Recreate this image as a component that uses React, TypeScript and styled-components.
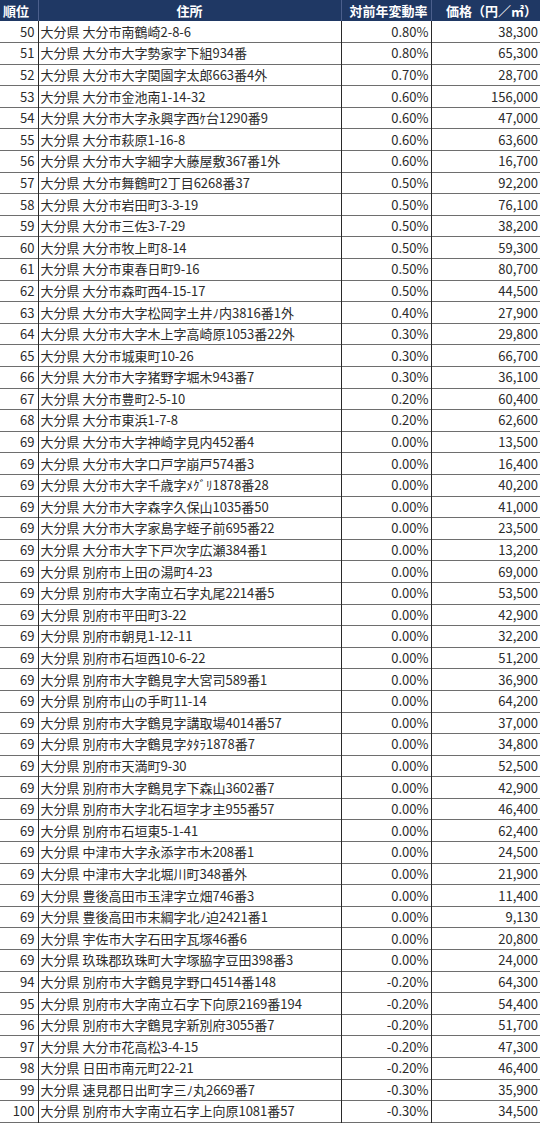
import styled, { createGlobalStyle } from 'styled-components';

const GlobalStyle = createGlobalStyle`
  html, body {
    margin: 0;
    padding: 0;
    background: #ffffff;
  }
`;

const Table = styled.table`
  width: 540px;
  border-collapse: collapse;
  table-layout: fixed;
  font-family: "Noto Sans CJK JP", "Noto Sans", sans-serif;
  font-size: 13px;
  color: #2b2b2b;
`;

const HeadRow = styled.tr`
  height: 21px;
  background: #1f3864;
`;

const HeadCell = styled.th<{ $align?: string }>`
  padding: 0 3px;
  color: #ffffff;
  font-weight: 700;
  font-size: 13px;
  line-height: 21px;
  text-align: ${(p) => p.$align || 'center'};
  white-space: nowrap;
  overflow: hidden;
  border-left: 1px solid #4b5f8c;
  &:first-child {
    border-left: none;
  }
`;

const Row = styled.tr`
  height: 21.6px;
  border-bottom: 1px solid #6e6e6e;
`;

const Cell = styled.td<{ $align?: string }>`
  padding: 0 2px;
  line-height: 20px;
  text-align: ${(p) => p.$align || 'left'};
  white-space: nowrap;
  overflow: hidden;
  border-left: 1px solid #2a2a2a;
  &:first-child {
    border-left: none;
    padding-right: 3px;
  }
`;

type Item = [string, string, string, string];

const rows: Item[] = [
  ['50', '大分県 大分市南鶴崎2-8-6', '0.80%', '38,300'],
  ['51', '大分県 大分市大字勢家字下組934番', '0.80%', '65,300'],
  ['52', '大分県 大分市大字関園字太郎663番4外', '0.70%', '28,700'],
  ['53', '大分県 大分市金池南1-14-32', '0.60%', '156,000'],
  ['54', '大分県 大分市大字永興字西ｹ台1290番9', '0.60%', '47,000'],
  ['55', '大分県 大分市萩原1-16-8', '0.60%', '63,600'],
  ['56', '大分県 大分市大字細字大藤屋敷367番1外', '0.60%', '16,700'],
  ['57', '大分県 大分市舞鶴町2丁目6268番37', '0.50%', '92,200'],
  ['58', '大分県 大分市岩田町3-3-19', '0.50%', '76,100'],
  ['59', '大分県 大分市三佐3-7-29', '0.50%', '38,200'],
  ['60', '大分県 大分市牧上町8-14', '0.50%', '59,300'],
  ['61', '大分県 大分市東春日町9-16', '0.50%', '80,700'],
  ['62', '大分県 大分市森町西4-15-17', '0.50%', '44,500'],
  ['63', '大分県 大分市大字松岡字土井ﾉ内3816番1外', '0.40%', '27,900'],
  ['64', '大分県 大分市大字木上字高崎原1053番22外', '0.30%', '29,800'],
  ['65', '大分県 大分市城東町10-26', '0.30%', '66,700'],
  ['66', '大分県 大分市大字猪野字堀木943番7', '0.30%', '36,100'],
  ['67', '大分県 大分市豊町2-5-10', '0.20%', '60,400'],
  ['68', '大分県 大分市東浜1-7-8', '0.20%', '62,600'],
  ['69', '大分県 大分市大字神崎字見内452番4', '0.00%', '13,500'],
  ['69', '大分県 大分市大字口戸字崩戸574番3', '0.00%', '16,400'],
  ['69', '大分県 大分市大字千歳字ﾒｸﾞﾘ1878番28', '0.00%', '40,200'],
  ['69', '大分県 大分市大字森字久保山1035番50', '0.00%', '41,000'],
  ['69', '大分県 大分市大字家島字蛭子前695番22', '0.00%', '23,500'],
  ['69', '大分県 大分市大字下戸次字広瀬384番1', '0.00%', '13,200'],
  ['69', '大分県 別府市上田の湯町4-23', '0.00%', '69,000'],
  ['69', '大分県 別府市大字南立石字丸尾2214番5', '0.00%', '53,500'],
  ['69', '大分県 別府市平田町3-22', '0.00%', '42,900'],
  ['69', '大分県 別府市朝見1-12-11', '0.00%', '32,200'],
  ['69', '大分県 別府市石垣西10-6-22', '0.00%', '51,200'],
  ['69', '大分県 別府市大字鶴見字大宮司589番1', '0.00%', '36,900'],
  ['69', '大分県 別府市山の手町11-14', '0.00%', '64,200'],
  ['69', '大分県 別府市大字鶴見字講取場4014番57', '0.00%', '37,000'],
  ['69', '大分県 別府市大字鶴見字ﾀﾀﾗ1878番7', '0.00%', '34,800'],
  ['69', '大分県 別府市天満町9-30', '0.00%', '52,500'],
  ['69', '大分県 別府市大字鶴見字下森山3602番7', '0.00%', '42,900'],
  ['69', '大分県 別府市大字北石垣字才主955番57', '0.00%', '46,400'],
  ['69', '大分県 別府市石垣東5-1-41', '0.00%', '62,400'],
  ['69', '大分県 中津市大字永添字市木208番1', '0.00%', '24,500'],
  ['69', '大分県 中津市大字北堀川町348番外', '0.00%', '21,900'],
  ['69', '大分県 豊後高田市玉津字立畑746番3', '0.00%', '11,400'],
  ['69', '大分県 豊後高田市末綱字北ﾉ迫2421番1', '0.00%', '9,130'],
  ['69', '大分県 宇佐市大字石田字瓦塚46番6', '0.00%', '20,800'],
  ['69', '大分県 玖珠郡玖珠町大字塚脇字豆田398番3', '0.00%', '24,000'],
  ['94', '大分県 別府市大字鶴見字野口4514番148', '-0.20%', '64,300'],
  ['95', '大分県 別府市大字南立石字下向原2169番194', '-0.20%', '54,400'],
  ['96', '大分県 別府市大字鶴見字新別府3055番7', '-0.20%', '51,700'],
  ['97', '大分県 大分市花高松3-4-15', '-0.20%', '47,300'],
  ['98', '大分県 日田市南元町22-21', '-0.20%', '46,400'],
  ['99', '大分県 速見郡日出町字三ﾉ丸2669番7', '-0.30%', '35,900'],
  ['100', '大分県 別府市大字南立石字上向原1081番57', '-0.30%', '34,500'],
];

export default function App() {
  return (
    <>
      <GlobalStyle />
      <Table>
        <colgroup>
          <col style={{ width: 38 }} />
          <col style={{ width: 303 }} />
          <col style={{ width: 90 }} />
          <col style={{ width: 109 }} />
        </colgroup>
        <thead>
          <HeadRow>
            <HeadCell $align="left">順位</HeadCell>
            <HeadCell>住所</HeadCell>
            <HeadCell $align="right">対前年変動率</HeadCell>
            <HeadCell $align="right">価格（円／㎡）</HeadCell>
          </HeadRow>
        </thead>
        <tbody>
          {rows.map(([rank, addr, rate, price], i) => (
            <Row key={i}>
              <Cell $align="right">{rank}</Cell>
              <Cell>{addr}</Cell>
              <Cell $align="right">{rate}</Cell>
              <Cell $align="right">{price}</Cell>
            </Row>
          ))}
        </tbody>
      </Table>
    </>
  );
}
